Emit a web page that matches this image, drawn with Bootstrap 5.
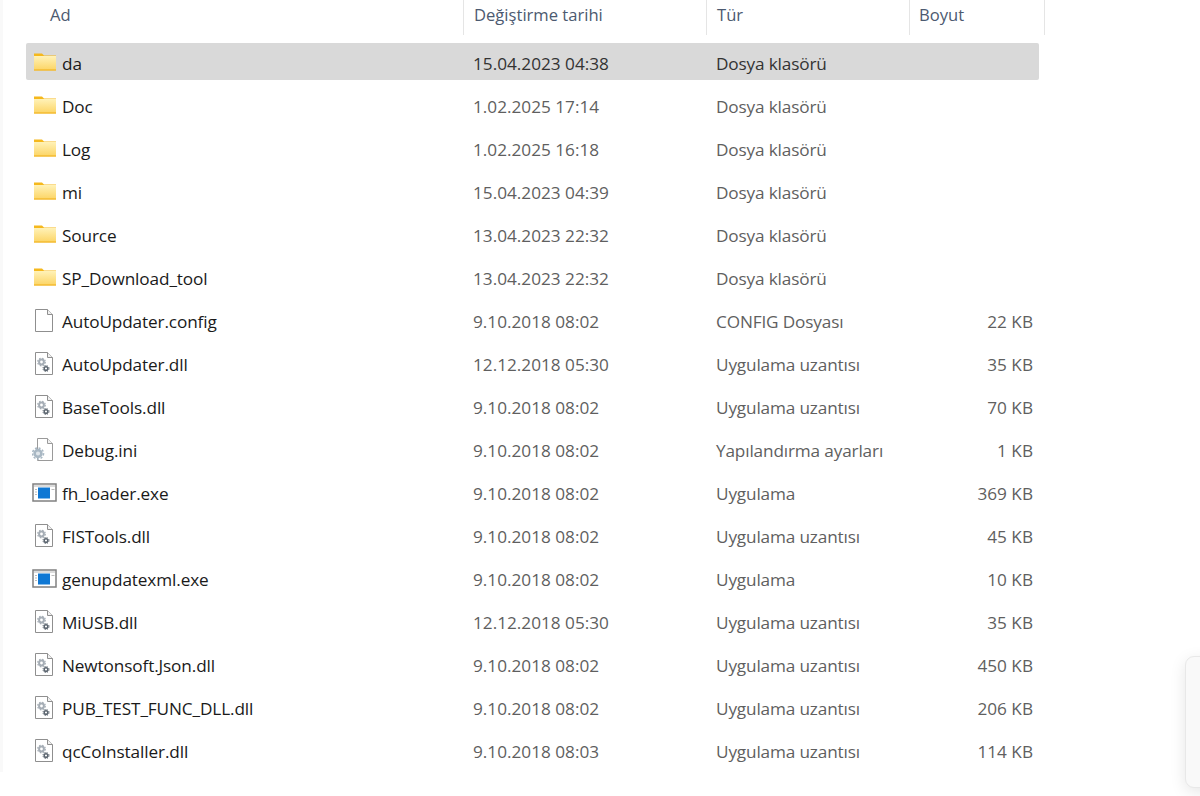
<!doctype html>
<html lang="tr"><head><meta charset="utf-8"><title>Dosyalar</title>
<link href="https://cdn.jsdelivr.net/npm/bootstrap@5.3.0/dist/css/bootstrap.min.css" rel="stylesheet">
<style>
html,body{height:796px;overflow:hidden;background:#fff}
body{font-family:"Open Sans","Noto Sans","Liberation Sans",sans-serif;font-size:17.2px;color:#1a1a1a;position:relative}
.side-strip{width:3px;height:772px;background:#f9f9f9;flex:none}
.explorer{width:1197px}
.head-row{height:35px;color:#4c5a70;margin-left:23px;width:1022px;font-size:16.6px}
.head-cell{height:35px;padding-left:10px;line-height:30px;border-right:1px solid #e5e5e5}
.head-name{width:438px;padding-left:24px;flex:none}
.head-date{width:243px;flex:none}
.head-type{width:203px;flex:none}
.head-size{width:135px;flex:none;padding-left:9px}
.file-rows{margin-top:8px;margin-left:23px;width:1013px}
.file-row{height:37px;margin-bottom:6px;border-radius:2px;line-height:41px}
.file-row.is-sel{background:#d9d9d9}
.cell-name{width:447px;flex:none;padding-left:6px;display:flex;align-items:flex-start;letter-spacing:-.12px}
.cell-date{width:243px;flex:none;color:#5f5f5f}
.cell-type{width:203px;flex:none;color:#5f5f5f;letter-spacing:-.15px}
.is-sel .cell-date,.is-sel .cell-type{color:#333}
.cell-size{width:120px;flex:none;text-align:right;padding-right:6px;color:#5f5f5f}
.file-ico{width:26px;height:24px;flex:none;margin:6.500px 4px 0 0}
.peek-card{position:absolute;left:1185px;top:656px;width:40px;height:132px;background:#f9f9f9;border:1px solid #e8e8e8;border-radius:9px;box-shadow:0 4px 16px rgba(0,0,0,.1)}
</style></head><body>
<svg width="0" height="0" class="position-absolute">
<defs>
<linearGradient id="fg" x1="0" y1="0" x2="0" y2="1"><stop offset="0" stop-color="#fff2b8"/><stop offset="1" stop-color="#fcd463"/></linearGradient>
<symbol id="i-folder" viewBox="0 0 26 24"><path d="M2 3.500h8l2 2h12v2H2z" fill="#f5b81c"/><rect x="2" y="6" width="22" height="14.500" fill="url(#fg)"/><rect x="2" y="19.500" width="22" height="1" fill="#efad17"/></symbol>
<symbol id="i-file" viewBox="0 0 26 24"><path d="M3.500 1.500h12l5 5v17h-17z" fill="#fff" stroke="#8f8f8f"/><path d="M15.500 1.500v5h5" fill="#f0f0f0" stroke="#8f8f8f"/></symbol>
<symbol id="i-dll" viewBox="0 0 26 24"><path d="M3.500 1.500h12l5 5v17h-17z" fill="#fff" stroke="#8f8f8f"/><path d="M15.500 1.500v5h5" fill="#f0f0f0" stroke="#8f8f8f"/><circle cx="9.500" cy="11" r="2.400" fill="none" stroke="#a5adb5" stroke-width="2"/><circle cx="9.500" cy="11" r="3.800" fill="none" stroke="#a5adb5" stroke-width="1.200" stroke-dasharray="1.600 1.400"/><circle cx="14" cy="17.500" r="1.800" fill="none" stroke="#5c6670" stroke-width="1.500"/><circle cx="14" cy="17.500" r="3" fill="none" stroke="#5c6670" stroke-width="1" stroke-dasharray="1.300 1.100"/></symbol>
<symbol id="i-ini" viewBox="0 0 26 24"><path d="M5.500 1.500h10l5 5v17h-15z" fill="#fff" stroke="#9a9a9a"/><path d="M15.500 1.500v5h5" fill="#f0f0f0" stroke="#9a9a9a"/><circle cx="6" cy="16.500" r="3.400" fill="#dfe5ea" stroke="#a9b8c4" stroke-width="2.600"/><circle cx="6" cy="16.500" r="5.500" fill="none" stroke="#a9b8c4" stroke-width="1.600" stroke-dasharray="2 1.700"/></symbol>
<symbol id="i-exe" viewBox="0 0 26 24"><rect x="1" y="4" width="23" height="17" fill="#fff" stroke="#808080" stroke-width="1.500"/><rect x="2" y="5" width="21" height="2" fill="#dcdcdc"/><rect x="6" y="7.500" width="12" height="11" fill="#0f78d4"/><path d="M3 9.500h2M3 12h2M3 14.500h2M19.500 9.500h3" stroke="#bbb"/></symbol>
</defs></svg>
<div class="d-flex">
<div class="side-strip"></div>
<main class="explorer">
<div class="head-row d-flex">
<div class="head-cell head-name">Ad</div>
<div class="head-cell head-date">Değiştirme tarihi</div>
<div class="head-cell head-type">Tür</div>
<div class="head-cell head-size">Boyut</div>
</div>
<div class="file-rows" id="rows"></div>
</main>
</div>
<div class="peek-card"></div>
<script>
const D='Dosya klasörü',U='Uygulama uzantısı',A='Uygulama';
const data=[
['folder','da','15.04.2023 04:38',D,''],['folder','Doc','1.02.2025 17:14',D,''],['folder','Log','1.02.2025 16:18',D,''],
['folder','mi','15.04.2023 04:39',D,''],['folder','Source','13.04.2023 22:32',D,''],['folder','SP_Download_tool','13.04.2023 22:32',D,''],
['file','AutoUpdater.config','9.10.2018 08:02','CONFIG Dosyası','22 KB'],['dll','AutoUpdater.dll','12.12.2018 05:30',U,'35 KB'],
['dll','BaseTools.dll','9.10.2018 08:02',U,'70 KB'],['ini','Debug.ini','9.10.2018 08:02','Yapılandırma ayarları','1 KB'],
['exe','fh_loader.exe','9.10.2018 08:02',A,'369 KB'],['dll','FISTools.dll','9.10.2018 08:02',U,'45 KB'],
['exe','genupdatexml.exe','9.10.2018 08:02',A,'10 KB'],['dll','MiUSB.dll','12.12.2018 05:30',U,'35 KB'],
['dll','Newtonsoft.Json.dll','9.10.2018 08:02',U,'450 KB'],['dll','PUB_TEST_FUNC_DLL.dll','9.10.2018 08:02',U,'206 KB'],
['dll','qcCoInstaller.dll','9.10.2018 08:03',U,'114 KB']];
document.getElementById('rows').innerHTML=data.map((r,i)=>`<div class="file-row d-flex${i==0?' is-sel':''}"><div class="cell-name"><svg class="file-ico"><use href="#i-${r[0]}"/></svg><span>${r[1]}</span></div><div class="cell-date">${r[2]}</div><div class="cell-type">${r[3]}</div><div class="cell-size">${r[4]}</div></div>`).join('');
</script>
</body></html>
